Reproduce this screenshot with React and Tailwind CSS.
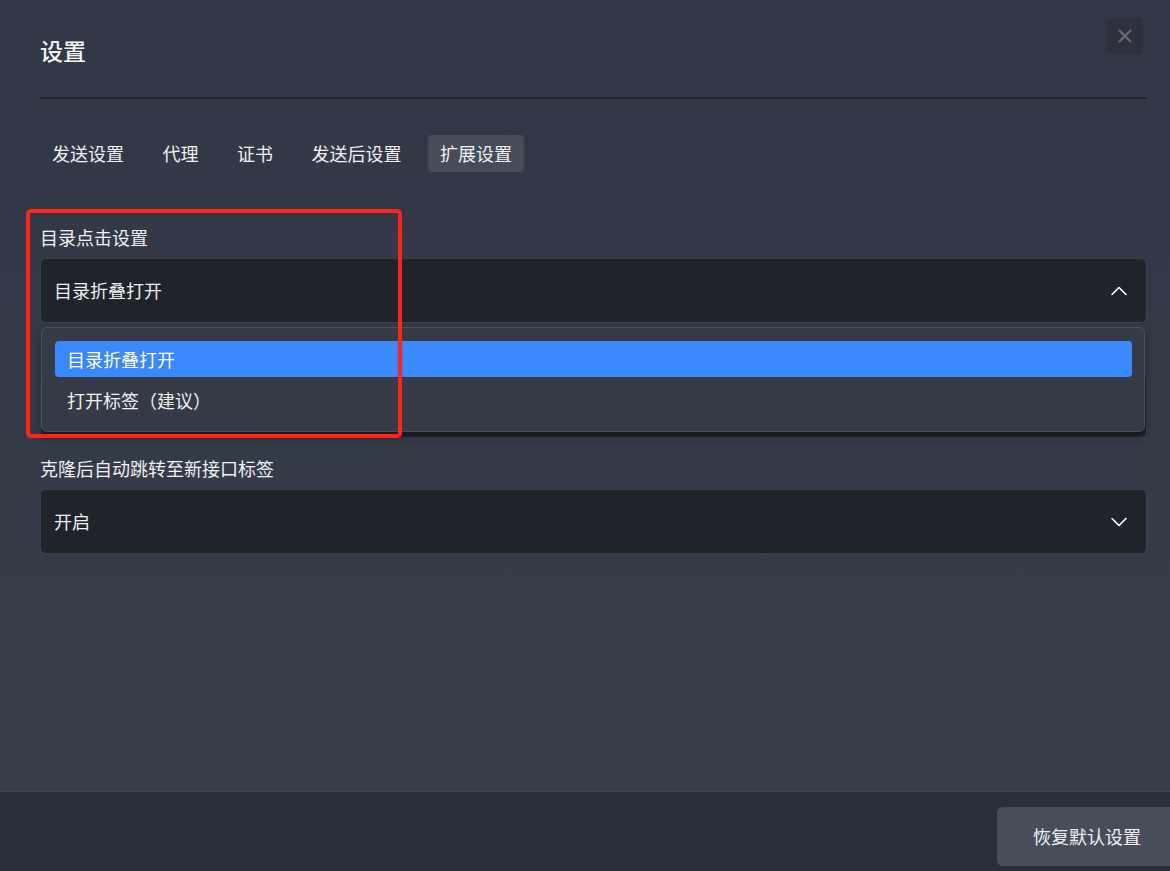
import { X, ChevronUp, ChevronDown } from 'lucide-react';

const tabs = ['发送设置', '代理', '证书', '发送后设置', '扩展设置'];

function Select({ value, open }) {
    return (
        <div className="h-[65px] flex items-center justify-between pl-[13px] pr-[13px] rounded-[6px] bg-[#1f232a] border border-[#3b414c]">
            <span className="text-[18px] text-[#eef0f3]">{value}</span>
            {open
                ? <ChevronUp className="w-[28px] h-[28px] text-white" strokeWidth={1.4} />
                : <ChevronDown className="w-[28px] h-[28px] text-white" strokeWidth={1.4} />}
        </div>
    );
}

export default function App() {
    return (
        <div className="relative h-[871px] w-full flex flex-col overflow-hidden bg-gradient-to-b from-[#313744] to-[#373d49] text-[#eef0f3]"
            style={{ fontFamily: '"Noto Sans CJK SC", "Noto Sans", sans-serif' }}>

            {/* Main */}
            <div className="flex-1 pl-[40px] pr-[23px]">
                {/* Header */}
                <div className="h-[97px] flex items-start justify-between">
                    <h1 className="mt-[33px] text-[23px] leading-[34px] font-medium text-[#f2f4f7]">设置</h1>
                    <button className="mt-[18px] mr-[4px] w-[36px] h-[36px] rounded-[4px] bg-[#2c313c] flex items-center justify-center">
                        <X className="w-[22px] h-[22px] text-[#646a75]" strokeWidth={2.6} />
                    </button>
                </div>
                <div className="h-[2px] bg-[#22262e]" />

                {/* Tabs */}
                <div className="mt-[36px] flex gap-[14.5px]">
                    {tabs.map((t, i) => (
                        <div key={t}
                            className={`h-[37px] px-[12px] flex items-center rounded-[4px] text-[18px] ${i === 4 ? 'bg-[#454c58]' : ''}`}>
                            {t}
                        </div>
                    ))}
                </div>

                {/* Fields */}
                <div className="mt-[55px] flex flex-col">
                    <div className="h-[20px] flex items-center text-[18px]">目录点击设置</div>
                    <div className="relative mt-[11px]">
                        <Select value="目录折叠打开" open />
                        {/* Dropdown menu */}
                        <div className="absolute z-10 left-[1px] right-[2px] top-[69px] h-[105px] rounded-[6px] bg-[#343a46] border border-[#4a505c] shadow-[0_4px_10px_rgba(0,0,0,0.35)] pt-[13px] pl-[13px] pr-[12px]">
                            <div className="h-[36px] rounded-[4px] bg-[#3b88fd] flex items-center pl-[12px] text-[18px] text-white">目录折叠打开</div>
                            <div className="h-[46px] flex items-center pl-[12px] text-[18px]">打开标签（建议）</div>
                        </div>
                    </div>

                    {/* field hidden under the open menu */}
                    <div className="mt-[20px] h-[20px]" />
                    <div className="mt-[10px]">
                        <Select value="" />
                    </div>

                    <div className="mt-[20px] h-[20px] flex items-center text-[18px]">克隆后自动跳转至新接口标签</div>
                    <div className="mt-[11px]">
                        <Select value="开启" />
                    </div>
                </div>
            </div>

            {/* Footer */}
            <div className="h-[80px] shrink-0 bg-[#2a303b] border-t border-[#3e4451] flex justify-end items-start pt-[15px]">
                <button className="-mr-[6px] w-[179px] h-[59px] rounded-[6px] bg-[#474e5a] text-[18px] text-[#eef0f3] pl-[36px] text-left">
                    恢复默认设置
                </button>
            </div>

            {/* Red annotation box */}
            <div className="absolute left-[26px] top-[209px] w-[376px] h-[229px] border-[4px] border-[#ff2418] rounded-[5px] pointer-events-none z-20" />
        </div>
    );
}
